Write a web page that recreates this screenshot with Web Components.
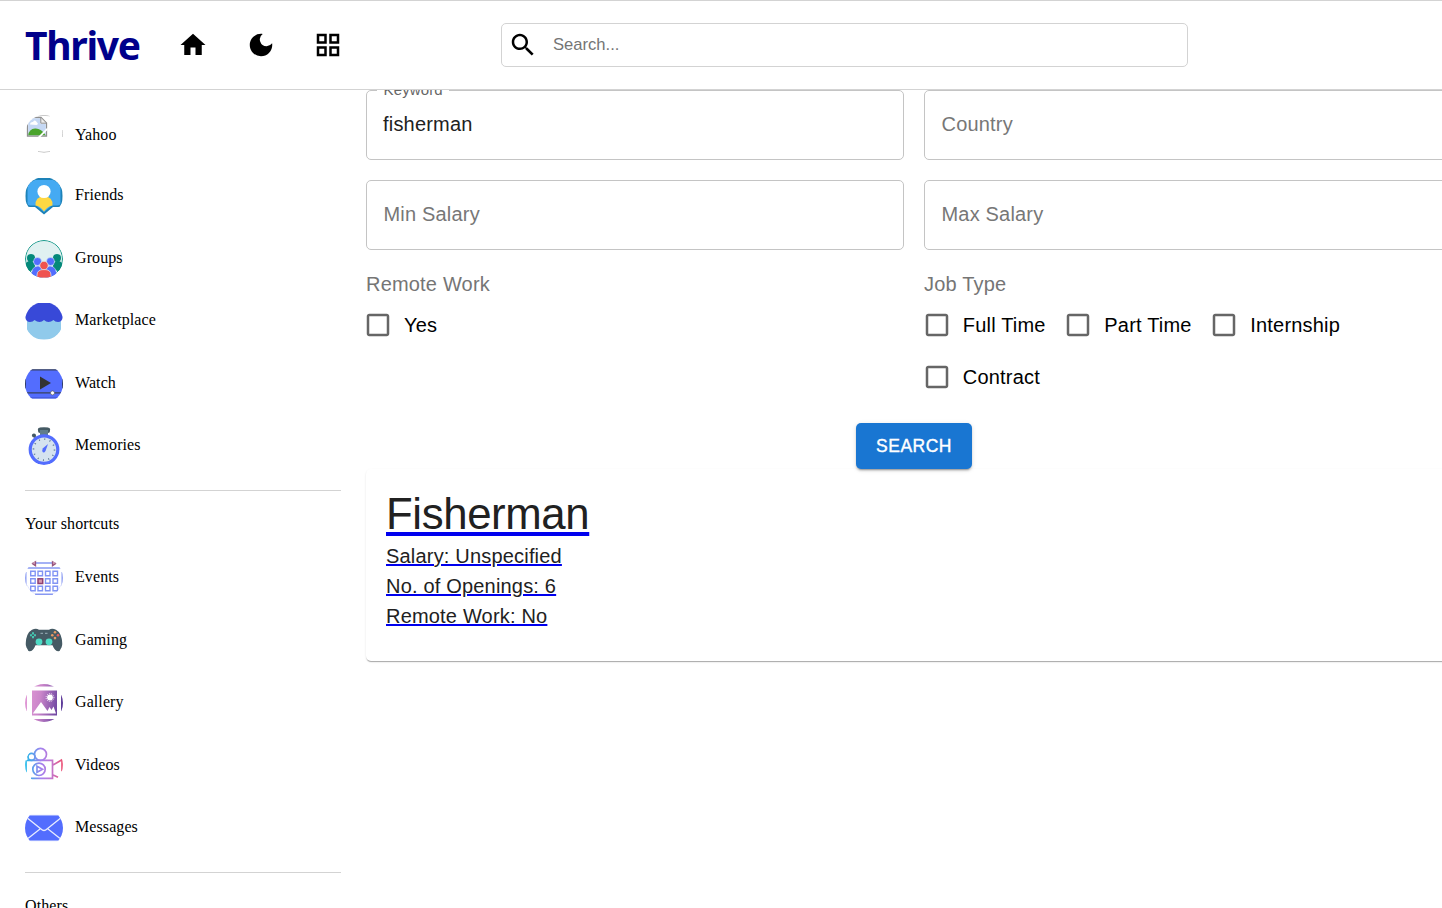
<!DOCTYPE html>
<html lang="en">
<head>
<meta charset="utf-8">
<title>Thrive</title>
<style>
html,body{margin:0;height:100%;overflow:hidden;background:#fff}
body{font-family:"Liberation Sans",Arial,sans-serif;color:#000}
</style>
</head>
<body>
<thrive-app></thrive-app>
<script>
const define=(name,html,setup)=>customElements.define(name,class extends HTMLElement{
  connectedCallback(){
    if(this.shadowRoot)return;
    const t=document.createElement('template');
    t.innerHTML=html;
    this.attachShadow({mode:'open'}).append(t.content.cloneNode(true));
    if(setup)setup(this,this.shadowRoot);
  }
});

const ICONS={
yahoo:`<path d="M13 .8Q19 0 25 .8M37.500 15Q38 19 37.500 22M13 36.600Q19 38 25 36.600" fill="none" stroke="#c4c4c4"/><path d="M2.500 2.500H16L21.500 8V21H2.500Z" fill="#fff" stroke="#8f8f8f" stroke-width="1.300"/><path d="M3.200 3.200H15.500V9H20.800V20.300H3.200Z" fill="#c5d8f4"/><path d="M5 9.500Q5 6.500 8 7Q10 4 12 7.500Q14 9 11.500 10Z" fill="#fff"/><path d="M3.200 20.300Q4 14 10 13.500Q16 13 20.800 20.300Z" fill="#4aa42c"/><path d="M13 22L22.500 12.500V15L15.500 22Z" fill="#fff"/><path d="M15.800 2.800V8.200H21.200" fill="#eee" stroke="#8f8f8f"/>`,
friends:`<path d="M10 1H28Q37.500 4 37.500 12V25Q37.500 30 33 30H28L19 37.500L10 30H5Q.5 30 .5 25V12Q.5 4 10 1Z" fill="#1d82b8"/><path d="M10 3H28Q35.500 6 35.500 12V26Q35.500 28 33 28.500H27L19 35L11 28.500H5Q2.500 28 2.500 26V12Q2.500 6 10 3Z" fill="#45aaf2"/><path d="M10.500 28.500Q10 19.500 19 19.500Q28 19.500 27.500 28.500Q23 29 19 34.500Q15 29 10.500 28.500Z" fill="#fed843"/><circle cx="19" cy="14.500" r="6.600" fill="#fff"/>`,
groups:`<circle cx="19" cy="19" r="18.500" fill="#e0f1f1" stroke="#16988a"/><g fill="#04897a"><circle cx="6" cy="18" r="4"/><circle cx="32" cy="18" r="4"/><circle cx="5" cy="26" r="5"/><circle cx="33" cy="26" r="5"/></g><g fill="#536dfe" stroke="#e0f1f1" stroke-width=".5"><path d="M6 38Q6 26 13 26Q19 26 19 38ZM19 38Q19 26 25 26Q32 26 32 38Z"/><circle cx="12.500" cy="21.500" r="4"/><circle cx="25.500" cy="21.500" r="4"/></g><g fill="#ef5350" stroke="#e0f1f1" stroke-width=".7"><path d="M12 38V35Q12 29.500 19 29.500Q26 29.500 26 35V38Z"/><circle cx="19" cy="25.500" r="4.200"/></g>`,
marketplace:`<path d="M2 16H36V29L28 37.500H10L2 29Z" fill="#90caeb"/><path d="M10 1H28Q35 5 38 13V15Q37 20 33 20Q30 20 28.500 18Q26 20 23.500 20Q21 20 19 18Q17 20 14.500 20Q12 20 9.500 18Q8 20 5 20Q1 20 0 15V13Q3 5 10 1Z" fill="#3849d8"/>`,
watch:`<g transform="translate(0 -.6)"><rect x="0" y="5" width="38" height="29" rx="3" fill="#536dfe"/><path d="M4 5.500H34M0 28.500H38" stroke="#39435f" stroke-width="1.200"/><path d="M5 33.500H33" stroke="#4055ce"/><path d="M.5 14V24M37.500 14V24" stroke="#303b60"/><path d="M15 12L26 18.500L15 25Z" fill="#333"/><circle cx="27.500" cy="28.500" r="2" fill="#fff" stroke="#555" stroke-width=".6"/></g>`,
memories:`<rect x="13" y=".3" width="12" height="5.700" rx="2" fill="#455a64"/><path d="M16 4H22V9H16ZM7.500 7.500L12 12" stroke="#607d8b" stroke-width="2" fill="#607d8b"/><circle cx="9" cy="8.500" r="2" fill="#455a64"/><circle cx="19" cy="22.600" r="13.800" fill="#d5e3ef" stroke="#536dfe" stroke-width="3.200"/><circle cx="19" cy="22.600" r="10.500" fill="none" stroke="#5c7692" stroke-width="1.600" stroke-dasharray="1 4.498"/><path d="M17.700 21.500L23 17L20.500 24Q18.500 27 17.200 24Z" fill="#536dfe"/>`,
events:`<path d="M10 4H28M2 9H36M.8 13V27M37.200 13V27M10 35.300H28" stroke="#8798f2" stroke-width="1.400"/><path d="M2 26Q4 32 10 35M36 26Q34 32 28 35" fill="none" stroke="#e3e7ff"/><g fill="none" stroke="#8194f4" stroke-width="1.400"><path d="M5.700 12.300h4.500v4.500h-4.500zM13 12.300h4.500v4.500H13zM20.500 12.300H25v4.500h-4.500zM28 12.300h4.500v4.500H28zM5.700 19.800h4.500v4.500h-4.500zM20.500 19.800H25v4.500h-4.500zM28 19.800h4.500v4.500H28zM5.700 27.300h4.500v4.500h-4.500zM13 27.300h4.500v4.500H13zM20.500 27.300H25v4.500h-4.500zM28 27.300h4.500v4.500H28z"/></g><rect x="13" y="19.800" width="4.700" height="4.700" fill="#d598ad" stroke="#8f3f70" stroke-width="1.500"/><path d="M6.500 4L10.500 1.200V6.800ZM31.500 4L27.500 1.200V6.800Z" fill="#d3a0b8" stroke="#96547d" stroke-width="1.300"/>`,
gaming:`<g transform="translate(0 .8)"><path d="M7 8Q11 6 14 8H24Q27 6 31 8Q37 11 37.500 23Q38 29 34 29.500Q30 30 27.500 23.500H10.500Q8 30 4 29.500Q0 29 .5 23Q1 11 7 8Z" fill="#455a64"/><path d="M8 10.500V16.500M5 13.500H11" stroke="#45c7b1" stroke-width="2"/><path d="M7 13.500H9" stroke="#455a64" stroke-width="1.500"/><path d="M15.500 11.500H18M20 11.500H22.500" stroke="#9cb1bb"/><circle cx="14" cy="20" r="3.400" fill="#4edbc5"/><circle cx="24" cy="20" r="3.400" fill="#4edbc5"/><g fill="#e59a63"><circle cx="30" cy="10.500" r="1.300"/><circle cx="27.300" cy="13.500" r="1.300"/><circle cx="33" cy="13.500" r="1.300" fill="#e65f5c"/><circle cx="30" cy="16.300" r="1.300"/></g></g>`,
gallery:`<defs><linearGradient id="g" gradientUnits="userSpaceOnUse" x1="0" x2="38" y1="10" y2="16"><stop stop-color="#e29ad6"/><stop offset=".4" stop-color="#cb86ca"/><stop offset="1" stop-color="#5a3998"/></linearGradient></defs><path d="M0 0H38V2.500H0ZM0 35H38V38H0ZM0 7H2V31H0ZM36 7H38V31H36Z" fill="url(#g)"/><rect x="7" y="6.500" width="25" height="25" fill="url(#g)"/><path d="M7.800 29.500L16 18L22.500 27L24.500 23L26.500 26L28.500 22.500L31 29.500Z" fill="#fff"/><circle cx="25" cy="13.500" r="2.900" fill="#fff"/><circle cx="25" cy="13.500" r="3.900" fill="none" stroke="#fff" stroke-width="1" stroke-dasharray=".9 1.200"/>`,
videos:`<defs><linearGradient id="v" gradientUnits="userSpaceOnUse" x1="0" x2="38" y1="18" y2="18"><stop stop-color="#19bce9"/><stop offset=".42" stop-color="#a381ef"/><stop offset=".7" stop-color="#c276cf"/><stop offset="1" stop-color="#ef4e6e"/></linearGradient></defs><g transform="translate(0 1.300)" fill="none" stroke="url(#v)" stroke-width="1.700"><circle cx="15.500" cy="7" r="6"/><circle cx="6.500" cy="9.500" r="3.500"/><path d="M2 13H27.500V31H6M1 13V25M27.500 18L37 12.500V24M27.500 27.500L33 30"/><circle cx="14" cy="22" r="6.200"/><path d="M12 19L17.500 22L12 25Z"/></g>`,
messages:`<rect y="6" width="38" height="26" rx="4" fill="#536dfe"/><path d="M3 6.400H35M3 31.600H35" stroke="#a2b1ff"/><path d="M1 8L16 20Q19 23 22 20L37 8M1 31L15 20M37 31L23 20" fill="none" stroke="#e8ecff" stroke-width="1.300"/>`,
home:`<path d="M10 20v-6h4v6h5v-8h3L12 3 2 12h3v8z"/>`,
moon:`<path d="M12 3a9 9 0 1 0 9 9c0-.46-.04-.92-.1-1.360a5.389 5.389 0 0 1-4.400 2.260 5.403 5.403 0 0 1-3.140-9.800c-.44-.06-.9-.1-1.360-.1z"/>`,
grid:`<path d="M3 3v8h8V3H3zm6 6H5V5h4v4zm-6 4v8h8v-8H3zm6 6H5v-4h4v4zm4-16v8h8V3h-8zm6 6h-4V5h4v4zm-6 4v8h8v-8h-8zm6 6h-4v-4h4v4z"/>`,
search:`<path d="M15.500 14h-.79l-.28-.27C15.410 12.590 16 11.110 16 9.500 16 5.910 13.090 3 9.500 3S3 5.910 3 9.500 5.910 16 9.500 16c1.610 0 3.090-.59 4.230-1.570l.27.28v.79l5 4.990L20.490 19l-4.990-5zm-6 0C7.010 14 5 11.990 5 9.500S7.010 5 9.500 5 14 7.010 14 9.500 11.990 14 9.500 14z"/>`
};

define('ui-icon',`<style>:host{display:block;flex:none;width:30px;height:30px}svg{display:block;width:100%;height:100%}</style><svg viewBox="0 0 24 24"></svg>`,(el,r)=>{
  r.querySelector('svg').innerHTML=ICONS[el.getAttribute('name')];
});

define('side-item',`<style>
:host{display:flex;align-items:center;gap:12px;height:37.500px;margin-bottom:25px}
svg{flex:none;display:block;width:38px;height:38px;border-radius:50%;overflow:hidden}
span{font:16px/18px "Liberation Serif","Times New Roman",serif;letter-spacing:.09px;white-space:nowrap;position:relative;top:-1px}
:host([icon=yahoo]) span{top:1px}
:host([icon=gaming]) span,:host([icon=videos]) span{top:-.6px}
</style><svg viewBox="0 0 38 38"></svg><span><slot></slot></span>`,(el,r)=>{
  r.querySelector('svg').innerHTML=ICONS[el.getAttribute('icon')];
});

define('side-heading',`<style>
:host{display:block;border-top:1px solid #d3d3d3;padding-top:24px;height:44px;font:16px/18px "Liberation Serif","Times New Roman",serif;letter-spacing:.09px}
</style><slot></slot>`);

define('top-bar',`<style>
:host{display:flex;align-items:center;box-sizing:border-box;height:90px;flex:none;border-top:1px solid #d3d3d3;border-bottom:1px solid #d3d3d3;padding-left:25px;background:#fff}
.logo{width:115px;font:700 39px/50px "Comic Sans MS","Noto Sans",sans-serif;letter-spacing:-1.300px;color:#00008b;white-space:nowrap}
nav{display:flex;gap:37.500px;margin-left:38px}
.search{display:flex;align-items:center;box-sizing:border-box;width:687px;height:44px;margin-left:158px;border:1px solid #d3d3d3;border-radius:5px;padding-left:6px;gap:15px;color:#757575;font-size:16.600px}
</style>
<div class="logo">Thrive</div>
<nav><ui-icon name="home"></ui-icon><ui-icon name="moon"></ui-icon><ui-icon name="grid"></ui-icon></nav>
<div class="search"><ui-icon name="search" style="color:#000"></ui-icon><span>Search...</span></div>`);

define('text-field',`<style>
:host{display:flex;align-items:center;box-sizing:border-box;height:70px;border:1px solid #c4c4c4;border-radius:5px;padding:0 16.500px 2px;font-size:20px;letter-spacing:.188px;color:#777;position:relative}
:host([label]){color:#212121;padding-left:16px}
label{position:absolute;left:10px;top:-10px;width:72px;box-sizing:border-box;padding-left:6.500px;background:#fff;color:#666;font-size:15px;line-height:17px;letter-spacing:.14px}
label:empty{display:none}
</style><label></label><slot></slot>`,(el,r)=>{
  r.querySelector('label').textContent=el.getAttribute('label')||'';
});

define('check-box',`<style>
:host{display:flex;align-items:center;height:52px;font-size:20px;letter-spacing:.188px;white-space:nowrap;margin-right:20.700px}
svg{width:30px;height:30px;margin:0 11.250px 0 -3.250px}
</style><svg viewBox="0 0 24 24" fill="#666"><path d="M19 5v14H5V5h14m0-2H5c-1.100 0-2 .9-2 2v14c0 1.100.9 2 2 2h14c1.100 0 2-.9 2-2V5c0-1.100-.9-2-2-2z"/></svg><slot></slot>`);

define('check-group',`<style>
:host{display:block}
h2{margin:0;font:20px/29px "Liberation Sans",Arial,sans-serif;letter-spacing:.188px;color:#757575}
div{display:flex;flex-wrap:wrap;width:450px}
:host([heading="Job Type"]) div{padding-left:.8px}
</style><h2></h2><div><slot></slot></div>`,(el,r)=>{
  r.querySelector('h2').textContent=el.getAttribute('heading');
});

define('primary-button',`<style>
:host{display:block}
button{display:block;box-sizing:border-box;width:116px;height:46px;padding:0;border:0;border-radius:5px;background:#1976d2;color:#fff;font:500 17.500px/30px "Liberation Sans",Arial,sans-serif;letter-spacing:.5px;-webkit-text-stroke:.4px #fff;box-shadow:0 3px 1px -2px rgba(0,0,0,.2),0 2px 2px rgba(0,0,0,.14),0 1px 5px rgba(0,0,0,.12)}
</style><button><slot></slot></button>`);

define('job-card',`<style>
:host{display:block;box-sizing:border-box;height:192px;padding:16px 20px;border-radius:5px;background:#fff;box-shadow:0 2px 1px -1px rgba(0,0,0,.2),0 1px 1px rgba(0,0,0,.14),0 1px 3px rgba(0,0,0,.06)}
a{display:block;color:#0000ee;text-decoration:underline}
h1,p{margin:0;font-weight:400}
span{color:#212121}
h1{font-size:43.750px;letter-spacing:-.38px;line-height:58px;height:56px}
p{font-size:20px;line-height:30px;letter-spacing:.188px}
</style><a><h1><span><slot name="title"></slot></span></h1><p><span><slot name="salary"></slot></span></p><p><span><slot name="openings"></slot></span></p><p><span><slot name="remote"></slot></span></p></a>`);

define('thrive-app',`<style>
:host{display:flex;flex-direction:column;height:100vh;overflow:hidden}
.body{display:flex;flex:1;min-height:0;overflow:hidden}
aside{flex:none;width:316px;padding:25px 25px 0}
main{flex:none;width:1096px}
.form{display:grid;grid-template-columns:538px 538px;gap:20px}
.action{display:flex;justify-content:center;margin-top:20px}
</style>
<top-bar></top-bar>
<div class="body">
<aside>
<side-item icon="yahoo">Yahoo</side-item>
<side-item icon="friends">Friends</side-item>
<side-item icon="groups">Groups</side-item>
<side-item icon="marketplace">Marketplace</side-item>
<side-item icon="watch">Watch</side-item>
<side-item icon="memories">Memories</side-item>
<side-heading>Your shortcuts</side-heading>
<side-item icon="events">Events</side-item>
<side-item icon="gaming">Gaming</side-item>
<side-item icon="gallery">Gallery</side-item>
<side-item icon="videos">Videos</side-item>
<side-item icon="messages">Messages</side-item>
<side-heading>Others</side-heading>
</aside>
<main>
<div class="form">
<text-field label="Keyword">fisherman</text-field>
<text-field>Country</text-field>
<text-field>Min Salary</text-field>
<text-field>Max Salary</text-field>
<check-group heading="Remote Work"><check-box>Yes</check-box></check-group>
<check-group heading="Job Type"><check-box>Full Time</check-box><check-box>Part Time</check-box><check-box>Internship</check-box><check-box>Contract</check-box></check-group>
</div>
<div class="action"><primary-button>SEARCH</primary-button></div>
<job-card><span slot="title">Fisherman</span><span slot="salary">Salary: Unspecified</span><span slot="openings">No. of Openings: 6</span><span slot="remote">Remote Work: No</span></job-card>
</main>
</div>`);
</script>
</body>
</html>
